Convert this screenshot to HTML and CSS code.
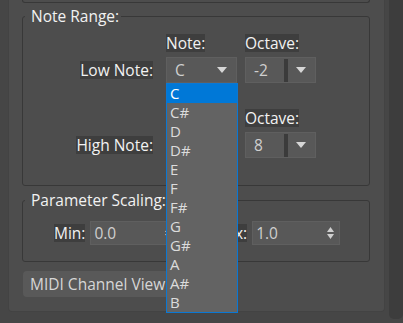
FILE: index.html
```html
<!DOCTYPE html>
<html lang="en">
<head>
<meta charset="UTF-8" />
<meta name="viewport" content="width=device-width, initial-scale=1" />
<title>MIDI Settings</title>
<link rel="stylesheet" href="styles.css">
</head>
<body>
  <div class="panel">
    <div class="group-stub"></div>

    <fieldset class="group note-range">
      <legend>Note Range:</legend>

      <div class="note-row">
        <span></span>
        <span class="lbl head">Note:</span>
        <span class="lbl head">Octave:</span>
        <span class="lbl side">Low Note:</span>
        <div class="combo-wrap">
          <div class="combo"><span class="val">C</span><i class="arrow"></i></div>
          <!-- open list of the low note combo -->
          <ul class="popup">
            <li class="sel">C</li>
            <li>C#</li>
            <li>D</li>
            <li>D#</li>
            <li>E</li>
            <li>F</li>
            <li>F#</li>
            <li>G</li>
            <li>G#</li>
            <li>A</li>
            <li>A#</li>
            <li>B</li>
          </ul>
        </div>
        <div class="combo split"><span class="val">-2</span><b class="sep"></b><i class="arrow"></i></div>
      </div>

      <div class="note-row">
        <span></span>
        <span class="lbl head"></span>
        <span class="lbl head">Octave:</span>
        <span class="lbl side">High Note:</span>
        <!-- sits under the open list -->
        <div class="combo"><span class="val"></span><i class="arrow"></i></div>
        <div class="combo split"><span class="val">8</span><b class="sep"></b><i class="arrow"></i></div>
      </div>
    </fieldset>

    <fieldset class="group scaling">
      <legend>Parameter Scaling:</legend>
      <div class="scale-row">
        <div class="pair">
          <span class="lbl">Min:</span>
          <div class="spin"><span class="val">0.0</span>
            <svg width="7" height="12" viewBox="0 0 7 12"><polygon points="3.5,0 7,5 0,5" /><polygon points="0,7 7,7 3.5,12" /></svg>
          </div>
        </div>
        <div class="pair">
          <span class="lbl">Max:</span>
          <div class="spin"><span class="val">1.0</span>
            <svg width="7" height="12" viewBox="0 0 7 12"><polygon points="3.5,0 7,5 0,5" /><polygon points="0,7 7,7 3.5,12" /></svg>
          </div>
        </div>
      </div>
    </fieldset>

    <button class="btn">MIDI Channel View</button>
  </div>

  <div class="scroll-strip"></div>
</body>
</html>
```

FILE: styles.css
```css
html, body {
  margin: 0;
  padding: 0;
  height: 100%;
  overflow: hidden;
  background: #464646;
  font-family: "Open Sans", "Noto Sans", sans-serif;
  font-size: 15.5px;
  color: #f0f0f0;
}
body {
  display: flex;
  align-items: flex-start;
}
.panel {
  margin-left: 8px;
  width: 377px;
  height: 312px;
  box-sizing: border-box;
  background: #4d4d4d;
  border: 1px solid #434343;
  border-top: none;
  border-radius: 0 0 4px 4px;
}
.scroll-strip {
  margin-left: 4px;
  width: 14px;
  height: 319px;
  background: #3d3d3d;
  border-radius: 0 0 5px 5px;
}

/* group boxes */
.group-stub {
  margin: 0 14px 0 13px;
  height: 2px;
  border: 1px solid #383838;
  border-top: none;
  border-radius: 0 0 3px 3px;
}
.group {
  margin: 4px 14px 0 13px;
  padding: 9px 0 27px 0;
  border: 1px solid #383838;
  border-radius: 3px;
  min-width: 0;
}
.group legend {
  margin-left: 2px;
  padding: 0 2px 0 6px;
  line-height: 18px;
  color: #f2f2f2;
}
.lbl {
  line-height: 18px;
  background: #3e3e3e;
  color: #f2f2f2;
  white-space: nowrap;
}

/* note range */
.note-row {
  display: grid;
  grid-template-columns: 135px 71px 71px;
  grid-template-rows: 18px 26px;
  column-gap: 8px;
  row-gap: 5px;
}
.note-row + .note-row {
  margin-top: 26px;
}
.lbl.head {
  justify-self: start;
}
.lbl.side {
  justify-self: end;
  align-self: center;
  margin-right: 5px;
}
.combo-wrap {
  position: relative;
}
.combo {
  display: flex;
  align-items: center;
  height: 26px;
  box-sizing: border-box;
  padding-left: 8px;
  background: #585858;
  border: 1px solid #5f5f5f;
  color: #cfcfcf;
}
.combo .val {
  flex: 1;
}
.arrow {
  width: 0;
  height: 0;
  margin-right: 9px;
  border-left: 5px solid transparent;
  border-right: 5px solid transparent;
  border-top: 6px solid #d6d6d6;
}
.sep {
  align-self: stretch;
  width: 4px;
  margin: 1px 8px 0 0;
  background: #3b3b3b;
}
.popup {
  position: absolute;
  top: 100%;
  left: 0;
  z-index: 5;
  width: 72px;
  box-sizing: border-box;
  margin: 0;
  padding: 0;
  list-style: none;
  background: #636363;
  border: 1px solid #0a78d4;
  font-size: 15px;
}
.popup li {
  height: 19px;
  line-height: 19px;
  padding-left: 3px;
  color: #dcdcdc;
}
.popup li.sel {
  background: #0078d7;
  color: #ffffff;
}

/* parameter scaling */
.scaling {
  margin-top: 5px;
  padding: 12px 0 16px 0;
}
.scale-row {
  display: flex;
  align-items: center;
  padding-left: 31px;
  gap: 34px;
}
.pair {
  display: flex;
  align-items: center;
  gap: 5px;
}
.spin {
  display: flex;
  align-items: center;
  width: 88px;
  height: 24px;
  box-sizing: border-box;
  padding: 0 5px 0 3px;
  background: #585858;
  border: 1px solid #5f5f5f;
  color: #cfcfcf;
}
.spin .val {
  flex: 1;
}
.spin svg {
  fill: #cfcfcf;
}

.btn {
  margin: 9px 0 0 14px;
  height: 26px;
  padding: 0 7px;
  border: none;
  border-radius: 4px;
  background: #595959;
  color: #d6d6d6;
  font-family: inherit;
  font-size: 15.5px;
}
```
